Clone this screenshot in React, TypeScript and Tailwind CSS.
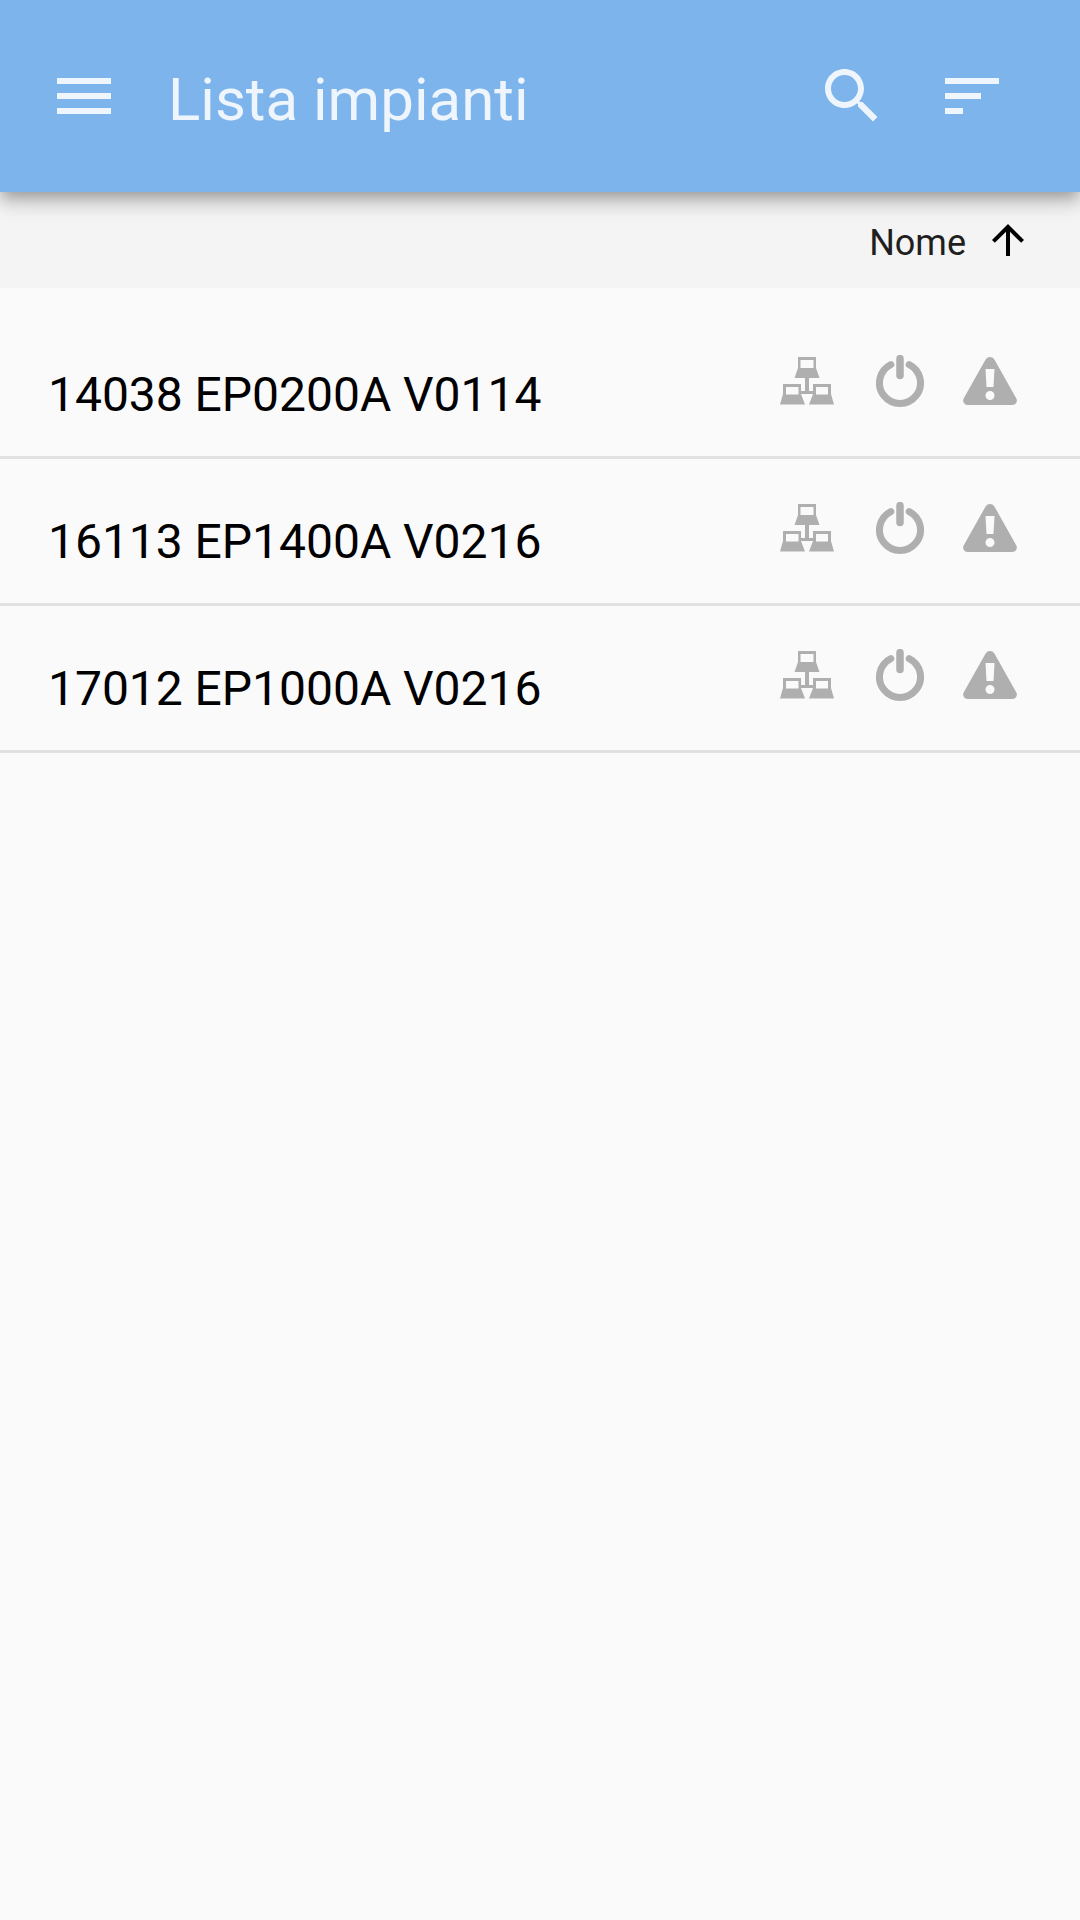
const plants = ["14038 EP0200A V0114", "16113 EP1400A V0216", "17012 EP1000A V0216"];

function MenuIcon() {
  return (
    <svg className="size-[72px] shrink-0" viewBox="0 0 24 24" fill="currentColor" aria-hidden="true">
      <path d="M3 18h18v-2H3v2zm0-5h18v-2H3v2zm0-7v2h18V6H3z" />
    </svg>
  );
}

function SearchIcon() {
  return (
    <svg className="size-[72px] shrink-0" viewBox="0 0 24 24" fill="currentColor" aria-hidden="true">
      <path d="M15.5 14h-.79l-.28-.27C15.41 12.59 16 11.11 16 9.5 16 5.91 13.09 3 9.5 3S3 5.91 3 9.5 5.91 16 9.5 16c1.61 0 3.09-.59 4.23-1.57l.27.28v.79l5 4.99L20.49 19l-4.99-5zm-6 0C7.01 14 5 11.99 5 9.5S7.01 5 9.5 5 14 7.01 14 9.5 11.99 14 9.5 14z" />
    </svg>
  );
}

function SortIcon() {
  return (
    <svg className="size-[72px] shrink-0" viewBox="0 0 24 24" fill="currentColor" aria-hidden="true">
      <path d="M3 18h6v-2H3v2zM3 6v2h18V6H3zm0 7h12v-2H3v2z" />
    </svg>
  );
}

function ArrowUpIcon() {
  return (
    <svg className="size-12 shrink-0" viewBox="0 0 24 24" fill="currentColor" aria-hidden="true">
      <path d="M4 12l1.41 1.41L11 7.83V20h2V7.83l5.58 5.59L20 12l-8-8-8 8z" />
    </svg>
  );
}

function NetworkIcon() {
  return (
    <svg className="h-12 w-[54px]" viewBox="0 0 54 48" fill="currentColor" fillRule="evenodd" aria-hidden="true">
      <path d="M18 0h18v11l3.500 10h-25l3.500-10zM20.500 3v8h13V3z" />
      <path d="M25 20h4v14h6v3H19v-3h6z" />
      <path d="M3 27h18v10l4 10.500H0L3 37zM6 30v7.500h12.500V30z" />
      <path d="M33 27h18v10l3 10.500H29l4-10.500zM36 30v7.500h12V30z" />
    </svg>
  );
}

function PowerIcon() {
  return (
    <svg className="h-[52px] w-12" viewBox="0 0 48 52" fill="none" stroke="currentColor" strokeWidth="7" strokeLinecap="round" aria-hidden="true">
      <path d="M14.800 9.600A20.500 20.500 0 1 0 33.200 9.600" />
      <path d="M24 3.500v17" strokeWidth="7.500" />
    </svg>
  );
}

function WarningIcon() {
  return (
    <svg className="h-12 w-[54px]" viewBox="0 0 54 48" fill="currentColor" fillRule="evenodd" aria-hidden="true">
      <path d="M22.600 2.400Q24.200 0 27 0t4.400 2.400l21.800 38.800Q54.500 43.500 53.300 45.700 52 48 49.300 48H4.700Q2 48 .7 45.700-.5 43.500.8 41.200zM22.500 12l1 18h7l1-18zM27 34a4.500 4.500 0 1 0 0 9 4.500 4.500 0 0 0 0-9z" />
    </svg>
  );
}

export default function App() {
  return (
    <div className="flex h-[1920px] w-[1080px] flex-col overflow-hidden bg-[#fafafa] font-['Roboto',sans-serif]">
      <header className="relative z-10 flex h-48 shrink-0 items-center bg-[#7cb4eb] px-12 text-[#eef5fd] shadow-[0_6px_12px_-3px_rgba(0,0,0,0.2),0_12px_15px_0_rgba(0,0,0,0.14),0_3px_30px_0_rgba(0,0,0,0.12)]">
        <button aria-label="Menu" className="flex">
          <MenuIcon />
        </button>
        <h1 className="ml-12 flex-1 pt-[8px] text-[60px] leading-[72px] tracking-normal">Lista impianti</h1>
        <div className="mr-6 flex gap-12">
          <button aria-label="Cerca" className="flex">
            <SearchIcon />
          </button>
          <button aria-label="Ordina" className="flex">
            <SortIcon />
          </button>
        </div>
      </header>
      <div className="flex h-24 shrink-0 items-center justify-end gap-[18px] bg-[#f4f4f4] pr-12 text-[#1f1f1f]">
        <span className="pt-[6px] text-[36px] leading-[48px]">Nome</span>
        <span className="text-black">
          <ArrowUpIcon />
        </span>
      </div>
      <ul className="pt-6">
        {plants.map((name) => (
          <li key={name} className="flex h-[147px] items-start justify-between border-b-[3px] border-[#e1e1e1] pr-[63px] pl-12">
            <span className="pt-[55px] text-[48px] leading-[56px] tracking-[-0.03px] text-black">{name}</span>
            <div className="flex h-[138px] items-center text-[#afafaf]">
              <NetworkIcon />
              <span className="mr-[39px] ml-[42px]">
                <PowerIcon />
              </span>
              <WarningIcon />
            </div>
          </li>
        ))}
      </ul>
    </div>
  );
}
